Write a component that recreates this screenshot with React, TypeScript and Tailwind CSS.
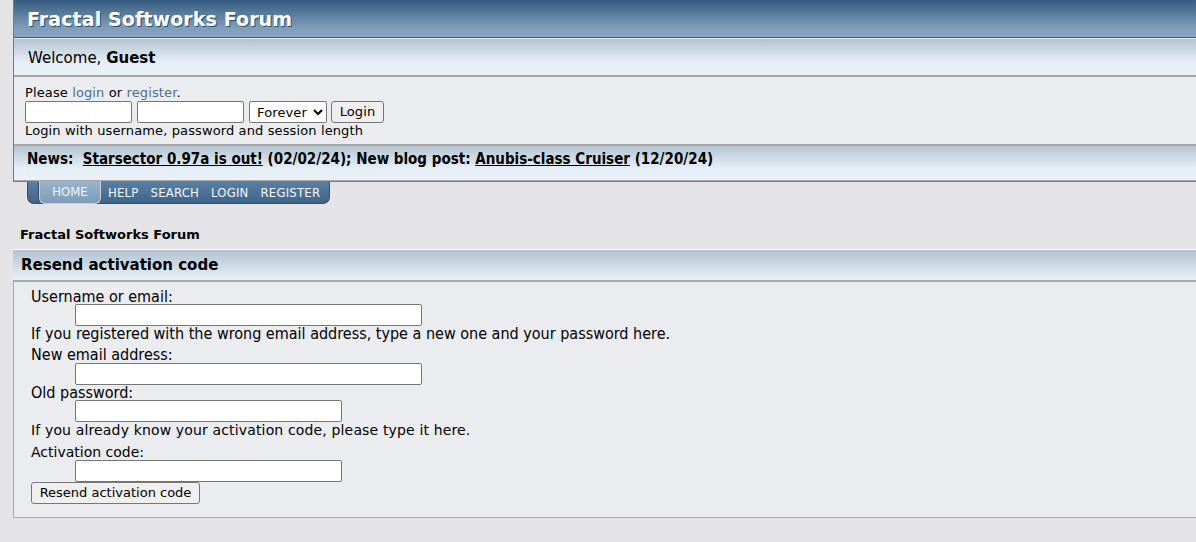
import { useState } from "react";

const tabs = ["HOME", "HELP", "SEARCH", "LOGIN", "REGISTER"];

const Field = ({ w }: { w: string }) => (
  <input
    type="text"
    className={`block h-[22px] ${w} bg-white border border-[#767676] rounded-[2px] px-1 text-[13px] outline-none`}
  />
);

const App = () => {
  const [length, setLength] = useState("forever");

  return (
    <div className="min-h-screen bg-[#e4e4e6] overflow-hidden font-['DejaVu_Sans',sans-serif] text-black">
      {/* header box */}
      <div className="ml-[13px] border-l border-b border-[#7a7a7a] w-[1200px]">
        <div className="h-[38px] bg-linear-to-b from-[#365b80] via-[#809eba] via-75% to-[#88a6c1] flex items-center pl-[13px] pt-[2px] border-b border-[#3b5878]">
          <h1 className="text-white font-bold text-[19px] tracking-[0.1px] [text-shadow:1px_1px_0_#2f4d6b]">
            Fractal Softworks Forum
          </h1>
        </div>
        <div className="h-[37px] border-t border-[#e8eef4] bg-linear-to-b from-[#b4c5d1] via-[#e6eef7] via-65% to-[#e8f0f8] flex items-center pl-[14px] pt-[2px] text-[15px]">
          Welcome,&nbsp;<b>Guest</b>
        </div>
        <div className="border-t-2 border-[#a5a5a5] bg-[#ebecf0] h-[69px] pl-[11px] pt-[8px] text-[13px] leading-[16px] tracking-[0.12px]">
          <p>
            Please <a className="text-[#4d6f8f]">login</a> or{" "}
            <a className="text-[#4d6f8f]">register</a>.
          </p>
          <div className="flex items-center gap-[5px]">
            <Field w="w-[107px]" />
            <Field w="w-[107px]" />
            <select
              value={length}
              onChange={(e) => setLength(e.target.value)}
              className="h-[22px] w-[78px] bg-white border border-[#767676] rounded-[2px] text-[13px] pl-[3px]"
            >
              <option value="60">1 Hour</option>
              <option value="1440">1 Day</option>
              <option value="10080">1 Week</option>
              <option value="43200">1 Month</option>
              <option value="forever">Forever</option>
            </select>
            <button className="h-[22px] w-[53px] -ml-[1px] bg-[#efefef] border border-[#767676] rounded-[3px] text-[13px]">
              Login
            </button>
          </div>
          <p>Login with username, password and session length</p>
        </div>
        <div className="h-[37px] border-t-2 border-[#a5a5a5] border-b border-b-[#a8a8a8] bg-linear-to-b from-[#b4c5d1] via-[#e6eef7] via-65% to-[#e8f0f8] flex items-center pl-[13px] pb-[8px] font-['DejaVu_Sans_Condensed',sans-serif] font-bold text-[15px]">
          News:&nbsp;&nbsp;<a className="underline">Starsector 0.97a is out!</a>&nbsp;(02/02/24); New blog post:&nbsp;
          <a className="underline">Anubis-class Cruiser</a>&nbsp;(12/20/24)
        </div>
      </div>

      {/* tab menu */}
      <div className="ml-[27px] flex h-[22px] w-[303px] rounded-b-[7px] border border-t-0 border-[#4a4a4a] bg-linear-to-b from-[#5a7fa3] to-[#3e6488] font-['DejaVu_Sans_Condensed',sans-serif] text-[13px] text-[#f2f6fa]">
        <div className="w-[11px] border-r border-[#3a4a5a]" />
        <div className="w-[62px] -mt-px h-[23px] rounded-b-[6px] border border-t-0 border-[#c9d3dc] bg-linear-to-b from-[#9ab4cc] to-[#7e9cb9] flex items-center justify-center">
          HOME
        </div>
        <div className="flex items-center gap-[12px] pl-[7px] tracking-[0.2px]">
          {tabs.slice(1).map((t) => (
            <span key={t}>{t}</span>
          ))}
        </div>
      </div>

      {/* linktree */}
      <div className="pl-[20px] mt-[23px] text-[13px] font-bold leading-[16px]">
        Fractal Softworks Forum
      </div>

      {/* resend activation */}
      <div className="ml-[13px] mt-[6px] border-t border-white">
        <div className="h-[32px] bg-linear-to-b from-[#b2c3cf] to-[#e9f0f8] border-b-2 border-[#a3abb2] flex items-center pl-[8px] font-bold text-[15px]">
          Resend activation code
        </div>
        <div className="bg-[#ebecf0] border-l border-b border-[#a8a8a8] pl-[17px] pt-[7px] pb-[13px] text-[14px]">
          <div className="font-['DejaVu_Sans_Condensed',sans-serif] text-[16px]">
            <p className="leading-[15px]">Username or email:</p>
            <div className="ml-[44px]"><Field w="w-[347px]" /></div>
            <p className="leading-[16px]">
              If you registered with the wrong email address, type a new one and your password here.
            </p>
            <p className="leading-[16px] mt-[5px]">New email address:</p>
            <div className="ml-[44px]"><Field w="w-[347px]" /></div>
            <p className="leading-[15px]">Old password:</p>
            <div className="ml-[44px]"><Field w="w-[267px]" /></div>
          </div>
          <p className="leading-[16px] tracking-[0.15px]">If you already know your activation code, please type it here.</p>
          <p className="leading-[15px] mt-[7px]">Activation code:</p>
          <div className="ml-[44px]"><Field w="w-[267px]" /></div>
          <button className="h-[22px] w-[169px] bg-[#efefef] border border-[#767676] rounded-[3px] text-[13px]">
            Resend activation code
          </button>
        </div>
      </div>
    </div>
  );
};

export default App;
